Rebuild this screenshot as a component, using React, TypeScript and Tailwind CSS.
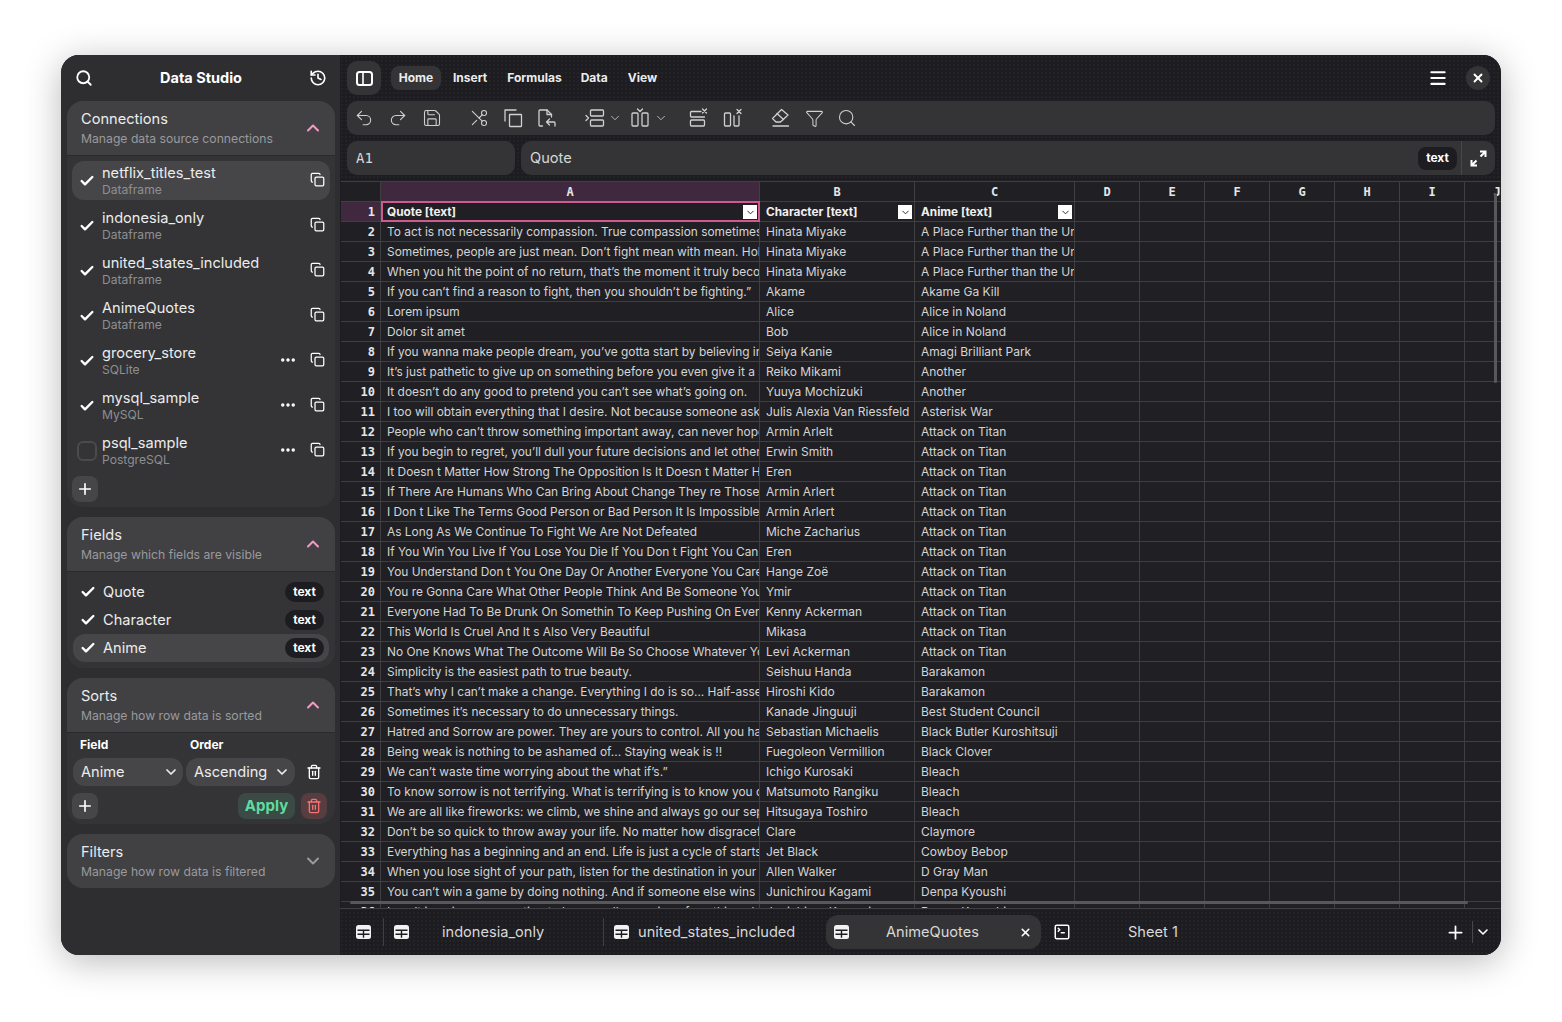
import type { ReactNode } from 'react'
import {
  Check,
  ChevronDown,
  ChevronUp,
  Copy,
  Ellipsis,
  Filter,
  Menu,
  Plus,
  Redo2,
  Save,
  Scissors,
  Search,
  History,
  SquareTerminal,
  Trash2,
  Undo2,
  X,
} from 'lucide-react'

const rows: [string, string, string][] = [
  ['To act is not necessarily compassion. True compassion sometimes comes from inaction.', 'Hinata Miyake', 'A Place Further than the Universe'],
  ['Sometimes, people are just mean. Don’t fight mean with mean. Hold your head high.', 'Hinata Miyake', 'A Place Further than the Universe'],
  ['When you hit the point of no return, that’s the moment it truly becomes a journey.', 'Hinata Miyake', 'A Place Further than the Universe'],
  ['If you can’t find a reason to fight, then you shouldn’t be fighting.”', 'Akame', 'Akame Ga Kill'],
  ['Lorem ipsum', 'Alice', 'Alice in Noland'],
  ['Dolor sit amet', 'Bob', 'Alice in Noland'],
  ['If you wanna make people dream, you’ve gotta start by believing in that dream yourself!', 'Seiya Kanie', 'Amagi Brilliant Park'],
  ['It’s just pathetic to give up on something before you even give it a shot.', 'Reiko Mikami', 'Another'],
  ['It doesn’t do any good to pretend you can’t see what’s going on.', 'Yuuya Mochizuki', 'Another'],
  ['I too will obtain everything that I desire. Not because someone asked me to.', 'Julis Alexia Van Riessfeld', 'Asterisk War'],
  ['People who can’t throw something important away, can never hope to change anything.', 'Armin Arlelt', 'Attack on Titan'],
  ['If you begin to regret, you’ll dull your future decisions and let others decide.', 'Erwin Smith', 'Attack on Titan'],
  ['It Doesn t Matter How Strong The Opposition Is It Doesn t Matter How Many There Are', 'Eren', 'Attack on Titan'],
  ['If There Are Humans Who Can Bring About Change They re Those Who Can Abandon', 'Armin Arlert', 'Attack on Titan'],
  ['I Don t Like The Terms Good Person or Bad Person It Is Impossible To Say', 'Armin Arlert', 'Attack on Titan'],
  ['As Long As We Continue To Fight We Are Not Defeated', 'Miche Zacharius', 'Attack on Titan'],
  ['If You Win You Live If You Lose You Die If You Don t Fight You Can t Win', 'Eren', 'Attack on Titan'],
  ['You Understand Don t You One Day Or Another Everyone You Care About Will Die', 'Hange Zoë', 'Attack on Titan'],
  ['You re Gonna Care What Other People Think And Be Someone You Are Not', 'Ymir', 'Attack on Titan'],
  ['Everyone Had To Be Drunk On Somethin To Keep Pushing On Everyone Was A Slave', 'Kenny Ackerman', 'Attack on Titan'],
  ['This World Is Cruel And It s Also Very Beautiful', 'Mikasa', 'Attack on Titan'],
  ['No One Knows What The Outcome Will Be So Choose Whatever You Will Regret Least', 'Levi Ackerman', 'Attack on Titan'],
  ['Simplicity is the easiest path to true beauty.', 'Seishuu Handa', 'Barakamon'],
  ['That’s why I can’t make a change. Everything I do is so... Half-assed and pathetic.', 'Hiroshi Kido', 'Barakamon'],
  ['Sometimes it’s necessary to do unnecessary things.', 'Kanade Jinguuji', 'Best Student Council'],
  ['Hatred and Sorrow are power. They are yours to control. All you have to do is to turn them', 'Sebastian Michaelis', 'Black Butler Kuroshitsuji'],
  ['Being weak is nothing to be ashamed of... Staying weak is !!', 'Fuegoleon Vermillion', 'Black Clover'],
  ['We can’t waste time worrying about the what if’s.”', 'Ichigo Kurosaki', 'Bleach'],
  ['To know sorrow is not terrifying. What is terrifying is to know you can’t go back', 'Matsumoto Rangiku', 'Bleach'],
  ['We are all like fireworks: we climb, we shine and always go our separate ways', 'Hitsugaya Toshiro', 'Bleach'],
  ['Don’t be so quick to throw away your life. No matter how disgraceful or embarrassing', 'Clare', 'Claymore'],
  ['Everything has a beginning and an end. Life is just a cycle of starts and stops.', 'Jet Black', 'Cowboy Bebop'],
  ['When you lose sight of your path, listen for the destination in your heart.', 'Allen Walker', 'D Gray Man'],
  ['You can’t win a game by doing nothing. And if someone else wins it for you', 'Junichirou Kagami', 'Denpa Kyoushi'],
  ['I can’t imagine ever wanting to be a smaller version of anything else in my life.', 'Junichirou Kagami', 'Denpa Kyoushi'],
]

const connections = [
  { name: 'netflix_titles_test', kind: 'Dataframe', on: true, more: false },
  { name: 'indonesia_only', kind: 'Dataframe', on: true, more: false },
  { name: 'united_states_included', kind: 'Dataframe', on: true, more: false },
  { name: 'AnimeQuotes', kind: 'Dataframe', on: true, more: false },
  { name: 'grocery_store', kind: 'SQLite', on: true, more: true },
  { name: 'mysql_sample', kind: 'MySQL', on: true, more: true },
  { name: 'psql_sample', kind: 'PostgreSQL', on: false, more: true },
]

const extraCols = ['D', 'E', 'F', 'G', 'H', 'I', 'J']

function SectionHeader({ title, desc, open }: { title: string; desc: string; open: boolean }) {
  return (
    <div className="flex h-[54px] items-center justify-between bg-[#414144] pl-[14px] pr-[12px]">
      <div>
        <p className="text-[14.6px] leading-[20px] text-[#ececec]">{title}</p>
        <p className="mt-[1px] text-[12.2px] leading-[17px] text-[#9a9a9d]">{desc}</p>
      </div>
      {open ? (
        <ChevronUp size={20} strokeWidth={2.4} className="text-[#f59ac3]" />
      ) : (
        <ChevronDown size={20} strokeWidth={2.4} className="text-[#9a9a9d]" />
      )}
    </div>
  )
}

function Section({ children }: { children: ReactNode }) {
  return <section className="overflow-hidden rounded-2xl bg-[#343436]">{children}</section>
}

function SquareButton({ children, className }: { children: ReactNode; className: string }) {
  return <div className={`flex size-[26px] items-center justify-center rounded-lg ${className}`}>{children}</div>
}

// filled table glyph used on the sheet tabs
function SheetIcon() {
  return (
    <svg width="15" height="14" viewBox="0 0 15 14" className="shrink-0">
      <rect width="15" height="14" rx="2.5" fill="#f2f2f2" />
      <path d="M1.5 5.25h12M1.5 9.25h12M7.5 5.25v7.5" stroke="#1c1c21" strokeWidth="1.4" fill="none" />
    </svg>
  )
}

function ToolSvg({ children, className }: { children: ReactNode; className?: string }) {
  return (
    <svg
      width="20"
      height="20"
      viewBox="0 0 20 20"
      fill="none"
      stroke="#d0d0d0"
      strokeWidth="1.3"
      strokeLinecap="round"
      strokeLinejoin="round"
      className={className}
    >
      {children}
    </svg>
  )
}

// 34px slot so the toolbar icons keep the same pitch
function Slot({ children, className = '' }: { children: ReactNode; className?: string }) {
  return <div className={`flex w-[34px] shrink-0 justify-center text-[#d0d0d0] ${className}`}>{children}</div>
}

function Sidebar() {
  return (
    <aside className="flex w-[279px] shrink-0 flex-col bg-[#2e2e31] pl-[6px] pr-[5px]">
      <div className="flex h-[46px] items-center justify-between pl-[8px] pr-[8px] text-white">
        <Search size={18} strokeWidth={2.4} />
        <h1 className="text-[14.5px] font-bold">Data Studio</h1>
        <History size={18} strokeWidth={2.2} />
      </div>

      <div className="flex flex-col gap-[10px]">
        <Section>
          <SectionHeader title="Connections" desc="Manage data source connections" open />
          <div className="border-t border-[#2a2a2c] px-[5px] pb-[5px] pt-[5px]">
            <div className="flex flex-col gap-[6px]">
              {connections.map((c, i) => (
                <div
                  key={c.name}
                  className={`flex h-[39px] items-center rounded-xl pr-[5px] ${i === 0 ? 'bg-[#464649]' : ''}`}
                >
                  <div className="flex w-[30px] justify-center">
                    {c.on ? (
                      <Check size={16} strokeWidth={3.6} className="text-white" />
                    ) : (
                      <div className="size-[20px] rounded-md border-2 border-[#4b4b4e]" />
                    )}
                  </div>
                  <div className="min-w-0 flex-1 pb-[2px]">
                    <p className="text-[14.6px] leading-[20px] text-[#ececec]">{c.name}</p>
                    <p className="-mt-[1px] text-[12.1px] leading-[15px] text-[#8f8f92]">{c.kind}</p>
                  </div>
                  {c.more && <Ellipsis size={18} strokeWidth={2.6} className="mb-[1px] mr-[13px] text-white" />}
                  <Copy size={15} strokeWidth={2} className="mb-[2px] text-white" />
                </div>
              ))}
            </div>
            <SquareButton className="mt-[6px] bg-[#464649] text-white">
              <Plus size={18} strokeWidth={2.2} />
            </SquareButton>
          </div>
        </Section>

        <Section>
          <SectionHeader title="Fields" desc="Manage which fields are visible" open />
          <div className="border-t border-[#2a2a2c] px-[6px] pb-[6px] pt-[6px]">
            {['Quote', 'Character', 'Anime'].map((f, i) => (
              <div
                key={f}
                className={`flex h-[28px] items-center rounded-xl pl-[7px] pr-[5px] ${i === 2 ? 'bg-[#464649]' : ''}`}
              >
                <Check size={16} strokeWidth={3.6} className="text-white" />
                <span className="ml-[7px] flex-1 pt-[1px] text-[14.6px] text-[#ececec]">{f}</span>
                <span className="flex h-[20px] w-[39px] items-center justify-center rounded-full bg-[#1c1c21] text-[12px] font-bold text-white">
                  text
                </span>
              </div>
            ))}
          </div>
        </Section>

        <Section>
          <SectionHeader title="Sorts" desc="Manage how row data is sorted" open />
          <div className="border-t border-[#2a2a2c] px-[5px] pb-[5px]">
            <div className="flex h-[24px] items-center text-[12px] font-bold text-white">
              <span className="ml-[8px] w-[110px]">Field</span>
              <span>Order</span>
            </div>
            <div className="mt-[1px] flex items-center">
              <div className="ml-[1px] flex h-[28px] w-[110px] items-center justify-between rounded-xl bg-[#464649] pl-[8px] pr-[4px] text-[14.6px] text-[#ececec]">
                <span className="pt-[1px]">Anime</span>
                <ChevronDown size={16} strokeWidth={2.6} />
              </div>
              <div className="ml-[3px] flex h-[28px] w-[109px] items-center justify-between rounded-xl bg-[#464649] pl-[8px] pr-[5px] text-[14.6px] text-[#ececec]">
                <span className="pt-[1px]">Ascending</span>
                <ChevronDown size={16} strokeWidth={2.6} />
              </div>
              <Trash2 size={16} strokeWidth={2} className="ml-[11px] text-white" />
            </div>
            <div className="mt-[7px] flex items-center">
              <SquareButton className="bg-[#464649] text-white">
                <Plus size={18} strokeWidth={2.2} />
              </SquareButton>
              <div className="ml-auto flex h-[26px] w-[57px] items-center justify-center rounded-lg bg-[#3b4a44] text-[15px] font-bold text-[#5fdca0]">
                Apply
              </div>
              <SquareButton className="ml-[6px] mr-[3px] bg-[#573d3f] text-[#f87171]">
                <Trash2 size={16} strokeWidth={2} />
              </SquareButton>
            </div>
          </div>
        </Section>

        <Section>
          <SectionHeader title="Filters" desc="Manage how row data is filtered" open={false} />
        </Section>
      </div>
    </aside>
  )
}

function TopBar() {
  return (
    <div className="flex h-[46px] items-center pl-[7px] pr-[11px]">
      <div className="flex size-[34px] items-center justify-center rounded-[10px] bg-[#343436]">
        <svg width="17" height="15" viewBox="0 0 17 15" fill="none" stroke="#fff" strokeWidth="2">
          <rect x="1" y="1" width="15" height="13" rx="2.5" />
          <path d="M7 1.5v12" strokeWidth="1.6" />
        </svg>
      </div>
      <nav className="ml-[10px] flex items-center text-[12px] font-bold text-[#ececec]">
        <span className="flex h-[24px] w-[50px] items-center justify-center rounded-lg bg-[#343436] pb-[1px]">Home</span>
        <span className="ml-[12px] pb-[1px]">Insert</span>
        <span className="ml-[20px] pb-[1px]">Formulas</span>
        <span className="ml-[19px] pb-[1px]">Data</span>
        <span className="ml-[20px] pb-[1px]">View</span>
      </nav>
      <Menu size={20} strokeWidth={2.5} className="ml-auto text-white" />
      <div className="ml-[18px] flex size-[24px] items-center justify-center rounded-full bg-[#343436] text-white">
        <X size={14} strokeWidth={3.2} />
      </div>
    </div>
  )
}

function Toolbar() {
  return (
    <div className="ml-[7px] mr-[6px] flex h-[34px] items-center rounded-[10px] bg-[#343436]">
      <Slot><Undo2 size={20} strokeWidth={1.3} /></Slot>
      <Slot><Redo2 size={20} strokeWidth={1.3} /></Slot>
      <Slot><Save size={20} strokeWidth={1.3} /></Slot>
      <Slot className="ml-[13px]"><Scissors size={20} strokeWidth={1.3} className="-scale-x-100" /></Slot>
      <Slot>
        <ToolSvg>
          <rect x="6.5" y="6.5" width="12" height="12" rx="0.5" />
          <path d="M2 13V2h11" />
        </ToolSvg>
      </Slot>
      <Slot>
        <ToolSvg>
          <path d="M5.5 18H3a1 1 0 0 1-1-1V3a1 1 0 0 1 1-1h7l4.5 4.5V9" />
          <path d="M10 2v4.5h4.5" />
          <path d="M18 18v-3a1 1 0 0 0-1-1H9.5m3-3-3 3 3 3" />
        </ToolSvg>
      </Slot>
      <ToolSvg className="ml-[21px] shrink-0">
        <rect x="5.5" y="2" width="13" height="6" rx="1" />
        <rect x="5.5" y="12" width="13" height="6" rx="1" />
        <path d="M1 7.5 3.5 10 1 12.5" />
      </ToolSvg>
      <ChevronDown size={14} strokeWidth={1.4} className="ml-[3px] text-[#d0d0d0]" />
      <ToolSvg className="ml-[8px] shrink-0">
        <rect x="2" y="5" width="6" height="13" rx="1" />
        <rect x="12" y="5" width="6" height="13" rx="1" />
        <path d="M7.5 1 10 3.5 12.5 1" />
      </ToolSvg>
      <ChevronDown size={14} strokeWidth={1.4} className="ml-[4px] text-[#d0d0d0]" />
      <Slot className="ml-[13px]">
        <ToolSvg>
          <path d="M13 3.5H3.5a1 1 0 0 0-1 1V8a1 1 0 0 0 1 1h13" />
          <rect x="2.5" y="12" width="14" height="6" rx="1" />
          <path d="m14.5 1 4 4m0-4-4 4" />
        </ToolSvg>
      </Slot>
      <Slot className="ml-[1px]">
        <ToolSvg>
          <rect x="1.5" y="5" width="6" height="13" rx="1" />
          <path d="M11 8v9a1 1 0 0 0 1 1h3a1 1 0 0 0 1-1V8" />
          <path d="m14 1.5 4 4m0-4-4 4" />
        </ToolSvg>
      </Slot>
      <Slot className="ml-[13px]">
        <ToolSvg>
          <path d="M11.5 1.5 18 7l-7.5 7H6l-3.5-3.5z" />
          <path d="m7 5.5 6.5 6" />
          <path d="M3 18h15.5" />
        </ToolSvg>
      </Slot>
      <Slot><Filter size={19} strokeWidth={1.3} /></Slot>
      <Slot className="-ml-px"><Search size={20} strokeWidth={1.3} /></Slot>
    </div>
  )
}

function FormulaBar() {
  return (
    <div className="ml-[7px] mr-[6px] mt-[6px] flex h-[34px] gap-[6px] text-[14.6px] text-[#d8d8d8]">
      <div className="flex w-[168px] items-center rounded-[10px] bg-[#343436] pl-[9px] font-['DejaVu_Sans_Mono',monospace] text-[14px]">A1</div>
      <div className="flex flex-1 items-center rounded-[10px] bg-[#343436] pl-[9px]">
        <span className="flex-1 pt-[1px]">Quote</span>
        <span className="flex h-[23px] w-[39px] items-center justify-center rounded-lg bg-[#1c1c21] text-[12px] font-bold text-white">
          text
        </span>
        <div className="ml-[4px] flex h-full w-[34px] items-center justify-center border-l border-[#48484b] text-white">
          <svg width="17" height="17" viewBox="0 0 17 17" fill="none" stroke="#fff" strokeWidth="2">
            <path d="M10 1.5h5.5V7M15 2l-4.5 4.5M7 15.5H1.5V10M2 15l4.5-4.5" />
          </svg>
        </div>
      </div>
    </div>
  )
}

const headCell = "flex h-[20px] shrink-0 items-center justify-center border-b border-r border-[#3f3f42] font-['DejaVu_Sans_Mono',monospace] text-[12px] font-bold text-[#e6e6e6]"
const bodyCell = 'h-[20px] shrink-0 overflow-hidden whitespace-nowrap border-b border-r border-[#3f3f42] pl-[6px] leading-[19px] text-[#d4d4d4]'

function HeaderCell({ label, width }: { label: string; width: string }) {
  return (
    <div className={`relative h-[20px] shrink-0 border-b border-r border-[#3f3f42] pl-[6px] text-[11.8px] font-bold leading-[20px] text-[#f0f0f0] ${width}`}>
      {label}
      <span className="absolute right-[2px] top-[3px] flex size-[14px] items-center justify-center bg-white">
        <ChevronDown size={11} strokeWidth={2} className="text-[#1c1c21]" />
      </span>
    </div>
  )
}

function Grid() {
  return (
    <div className="relative ml-[1px] mt-[6px] min-h-0 flex-1 overflow-hidden border-t border-[#3f3f42] bg-[#202024]">
      <div className="flex w-[1300px]">
        <div className={`${headCell} w-[40px]`} />
        <div className={`${headCell} w-[379px] bg-[#40283e]`}>A</div>
        <div className={`${headCell} w-[155px]`}>B</div>
        <div className={`${headCell} w-[160px]`}>C</div>
        {extraCols.map((c) => (
          <div key={c} className={`${headCell} w-[65px]`}>{c}</div>
        ))}
      </div>
      <div className="flex w-[1300px]">
        <div className={`${headCell} w-[40px] justify-end bg-[#40283e] pr-[5px]`}>1</div>
        <div className="relative w-[379px] shrink-0">
          <HeaderCell label="Quote [text]" width="w-[379px]" />
          <div className="pointer-events-none absolute inset-0 -top-px border-2 border-[#cf5a90]" />
        </div>
        <HeaderCell label="Character [text]" width="w-[155px]" />
        <HeaderCell label="Anime [text]" width="w-[160px]" />
        {extraCols.map((c) => (
          <div key={c} className={`${bodyCell} w-[65px]`} />
        ))}
      </div>
      {rows.map((r, i) => (
        <div key={i} className="flex w-[1300px]">
          <div className={`${headCell} w-[40px] justify-end pr-[5px]`}>{i + 2}</div>
          <div className={`${bodyCell} w-[379px] text-[11.9px]`}>{r[0]}</div>
          <div className={`${bodyCell} w-[155px] text-[12px]`}>{r[1]}</div>
          <div className={`${bodyCell} w-[160px] text-[12px]`}>{r[2]}</div>
          {extraCols.map((c) => (
            <div key={c} className={`${bodyCell} w-[65px]`} />
          ))}
        </div>
      ))}
      {/* scrollbars overlay the grid */}
      <div className="absolute right-[4px] top-[11px] h-[190px] w-[3px] rounded-full bg-[#58585b]" />
      <div className="absolute bottom-[4px] left-[9px] h-[3px] w-[1118px] rounded-full bg-[#58585b]" />
    </div>
  )
}

function TabBar() {
  return (
    <div className="flex h-[47px] shrink-0 items-center border-t border-[#3f3f42] pl-[16px] text-[14.6px] text-[#d8d8d8]">
      <SheetIcon />
      <div className="ml-[12px] h-[28px] w-px bg-[#3f3f42]" />
      <div className="ml-[10px] flex w-[209px] items-center">
        <SheetIcon />
        <span className="ml-[33px] pt-[1px]">indonesia_only</span>
      </div>
      <div className="h-[28px] w-px bg-[#3f3f42]" />
      <div className="ml-[10px] flex w-[212px] items-center">
        <SheetIcon />
        <span className="ml-[9px] pt-[1px]">united_states_included</span>
      </div>
      <div className="flex h-[34px] w-[215px] items-center rounded-xl bg-[#343436] pl-[8px] pr-[9px]">
        <SheetIcon />
        <span className="ml-[37px] flex-1 pt-[1px]">AnimeQuotes</span>
        <X size={13} strokeWidth={3} className="text-white" />
      </div>
      <SquareTerminal size={18} strokeWidth={2} className="ml-[12px] text-white" />
      <span className="ml-[57px] pt-[1px]">Sheet 1</span>
      <Plus size={21} strokeWidth={2} className="ml-auto text-white" />
      <div className="ml-[6px] h-[22px] w-px bg-[#48484b]" />
      <ChevronDown size={16} strokeWidth={2.4} className="ml-[2px] mr-[10px] text-white" />
    </div>
  )
}

export default function App() {
  return (
    <div className="flex h-screen justify-center overflow-hidden bg-white pt-[55px] font-['Inter',sans-serif]">
      <div className="flex h-[900px] w-[1440px] overflow-hidden rounded-[18px] bg-[#1c1c21] shadow-[0_6px_36px_rgba(0,0,0,0.28)]">
        <Sidebar />
        <main className="flex min-w-0 flex-1 flex-col bg-[#1c1c21] bg-[radial-gradient(#232328_1px,transparent_1px)] bg-[length:4px_4px]">
          <TopBar />
          <Toolbar />
          <FormulaBar />
          <Grid />
          <TabBar />
        </main>
      </div>
    </div>
  )
}
